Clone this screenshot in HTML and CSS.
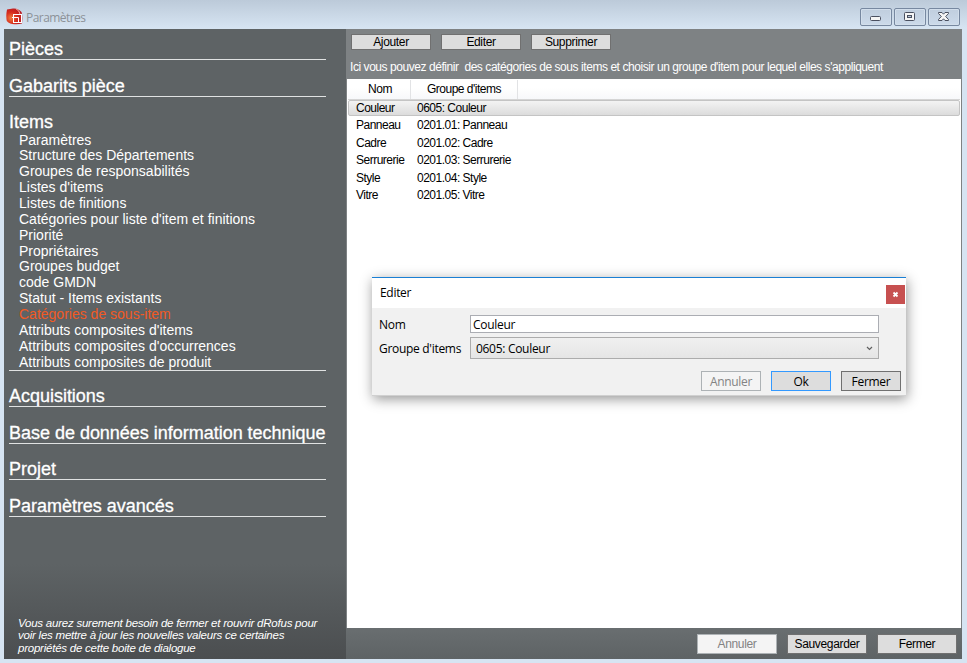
FILE: index.html
```html
<!DOCTYPE html>
<html lang="fr">
<head>
    <meta charset="UTF-8">
    <meta name="viewport" content="width=device-width, initial-scale=1.0">
    <title>Paramètres</title>
    <link rel="stylesheet" href="styles.css">
</head>
<body>
    <div class="window">
        <header class="titlebar">
            <svg class="logo" width="17" height="17" viewBox="0 0 17 17">
                <defs>
                    <radialGradient id="logoFill" cx="0.3" cy="0.6" r="0.7">
                        <stop offset="0" stop-color="#f08040"/>
                        <stop offset="0.5" stop-color="#d8301f"/>
                        <stop offset="1" stop-color="#b81820"/>
                    </radialGradient>
                </defs>
                <path d="M1 1.500Q-0.300 8 0.800 13Q4 16.500 9 16.300Q13 16.500 16 15.500Q16.800 8 15.500 4Q12 0 7 0.500Z" fill="url(#logoFill)"/>
                <path d="M10 0.800Q13.500 2.500 14 6" fill="none" stroke="#f4b0a0" stroke-width="1"/>
                <rect x="7.500" y="6.500" width="8" height="8" fill="none" stroke="#fff"/>
                <path d="M6 9.500H12.500V15" fill="none" stroke="#fff"/>
            </svg>
            <span class="window-title">Paramètres</span>
            <div class="window-controls">
                <span class="control">
                    <svg width="30" height="16" viewBox="0 0 30 16"><rect x="9.500" y="7.500" width="10" height="4" rx="1" fill="#f5f5f5" stroke="#4a5060"/></svg>
                </span>
                <span class="control">
                    <svg width="30" height="16" viewBox="0 0 30 16">
                        <rect x="9.500" y="3.500" width="10" height="8" rx="1" fill="#f5f5f5" stroke="#4a5060"/>
                        <rect x="12.500" y="6.500" width="4" height="2" fill="#b9c9da" stroke="#4a5060"/>
                    </svg>
                </span>
                <span class="control">
                    <svg width="30" height="16" viewBox="0 0 30 16">
                        <path d="M9.500 3.500H13L14.500 5.200L16 3.500H19.500V4.500L16.700 7.500L19.500 10.500V11.500H16L14.500 9.800L13 11.500H9.500V10.500L12.300 7.500L9.500 4.500Z" fill="#f5f5f5" stroke="#4a5060"/>
                    </svg>
                </span>
            </div>
        </header>

        <div class="content">
            <nav class="sidebar">
                <section class="group"><h2>Pièces</h2></section>
                <section class="group"><h2>Gabarits pièce</h2></section>
                <section class="group">
                    <h2>Items</h2>
                    <ul>
                        <li>Paramètres</li>
                        <li>Structure des Départements</li>
                        <li>Groupes de responsabilités</li>
                        <li>Listes d'items</li>
                        <li>Listes de finitions</li>
                        <li>Catégories pour liste d'item et finitions</li>
                        <li>Priorité</li>
                        <li>Propriétaires</li>
                        <li>Groupes budget</li>
                        <li>code GMDN</li>
                        <li>Statut - Items existants</li>
                        <li class="active">Catégories de sous-item</li>
                        <li>Attributs composites d'items</li>
                        <li>Attributs composites d'occurrences</li>
                        <li>Attributs composites de produit</li>
                    </ul>
                </section>
                <section class="group"><h2>Acquisitions</h2></section>
                <section class="group"><h2>Base de données information technique</h2></section>
                <section class="group"><h2>Projet</h2></section>
                <section class="group"><h2>Paramètres avancés</h2></section>
                <p class="note">Vous aurez surement besoin de fermer et rouvrir dRofus pour<br>voir les mettre à jour les nouvelles valeurs ce certaines<br>propriétés de cette boite de dialogue</p>
            </nav>

            <main class="main">
                <div class="toolbar">
                    <button class="btn">Ajouter</button>
                    <button class="btn">Editer</button>
                    <button class="btn">Supprimer</button>
                </div>
                <p class="info">Ici vous pouvez définir&nbsp; des catégories de sous items et choisir un groupe d'item pour lequel elles s'appliquent</p>

                <div class="list">
                    <div class="row head"><span>Nom</span><span>Groupe d'items</span></div>
                    <div class="row selected"><span>Couleur</span><span>0605: Couleur</span></div>
                    <div class="row"><span>Panneau</span><span>0201.01: Panneau</span></div>
                    <div class="row"><span>Cadre</span><span>0201.02: Cadre</span></div>
                    <div class="row"><span>Serrurerie</span><span>0201.03: Serrurerie</span></div>
                    <div class="row"><span>Style</span><span>0201.04: Style</span></div>
                    <div class="row"><span>Vitre</span><span>0201.05: Vitre</span></div>
                </div>

                <footer class="footer">
                    <button class="btn" disabled>Annuler</button>
                    <button class="btn">Sauvegarder</button>
                    <button class="btn">Fermer</button>
                </footer>
            </main>
        </div>
    </div>

    <div class="dialog">
        <div class="dialog-title">
            <span>Editer</span>
            <span class="dialog-close">
                <svg width="19" height="19" viewBox="0 0 19 19"><path d="M7.500 7.500L11.500 11.500M11.500 7.500L7.500 11.500" stroke="#fff" stroke-width="1.800"/></svg>
            </span>
        </div>
        <div class="form">
            <span class="label">Nom</span>
            <div class="field">Couleur</div>
            <span class="label">Groupe d'items</span>
            <div class="field select">
                <span>0605: Couleur</span>
                <svg width="7" height="5" viewBox="0 0 7 5"><path d="M1 1L3.500 3.500L6 1" fill="none" stroke="#606060" stroke-width="1.200"/></svg>
            </div>
        </div>
        <div class="dialog-buttons">
            <button class="dbtn" disabled>Annuler</button>
            <button class="dbtn primary">Ok</button>
            <button class="dbtn">Fermer</button>
        </div>
    </div>
</body>
</html>
```
FILE: styles.css
```css
* {
    margin: 0;
    padding: 0;
    box-sizing: border-box;
}

body {
    width: 967px;
    height: 663px;
    overflow: hidden;
    font-family: "Liberation Sans", Arial, sans-serif;
    font-size: 12px;
    color: #000;
}

.window {
    display: flex;
    flex-direction: column;
    height: 663px;
    padding: 0 5px 4px 4px;
    background: linear-gradient(#bccad9, #d6e4f2 28px);
}

/* Title bar */
.titlebar {
    display: flex;
    align-items: flex-start;
    height: 29px;
    flex: none;
}

.logo {
    margin: 8px 0 0 2px;
}

.window-title {
    margin: 10px 0 0 3px;
    font-family: "Open Sans", sans-serif;
    font-size: 12px;
    line-height: 16px;
    letter-spacing: -0.55px;
    color: #8c9298;
}

.window-controls {
    display: flex;
    gap: 2px;
    margin: 8px 2px 0 auto;
}

.control {
    width: 32px;
    height: 18px;
    border: 1px solid #7788a0;
    border-radius: 2px;
    background: linear-gradient(#c0cede, #ccdaea);
    box-shadow: inset 0 0 0 1px #d2deeb;
}

.control svg {
    display: block;
}

.content {
    display: flex;
    flex: 1;
}

/* Sidebar */
.sidebar {
    display: flex;
    flex-direction: column;
    width: 342px;
    padding: 0 20px 5px 5px;
    background: linear-gradient(#5e6365 535px, #4b4e50);
    color: #fff;
}

.group {
    padding-top: 15.5px;
    border-bottom: 1px solid #e0e2e2;
}

.group:first-child {
    padding-top: 10px;
}

.group h2 {
    font-size: 18px;
    font-weight: normal;
    line-height: 20px;
    letter-spacing: -0.02px;
    white-space: nowrap;
    -webkit-text-stroke: 0.3px #fff;
}

.group ul {
    margin-bottom: -0.6px;
    padding: 0.6px 0 0 10px;
    list-style: none;
}

.group li {
    font-size: 14px;
    line-height: 15.86px;
    white-space: nowrap;
}

.group .active {
    color: #f15a24;
}

.note {
    margin-top: auto;
    padding-left: 9px;
    font-size: 11.5px;
    font-style: italic;
    line-height: 12.5px;
    letter-spacing: -0.23px;
    white-space: nowrap;
}

/* Main panel */
.main {
    display: flex;
    flex-direction: column;
    width: 616px;
    background: #7e8284;
}

.toolbar {
    display: flex;
    gap: 10px;
    padding: 5px 5px 0;
}

.btn {
    width: 80px;
    height: 16px;
    border: 1px solid #707070;
    background: #dddddd;
    font-family: "Liberation Sans", Arial, sans-serif;
    font-size: 12px;
    letter-spacing: -0.35px;
    line-height: 14px;
    color: #000;
}

.btn:disabled {
    border-color: #adb2b5;
    background: #f4f4f4;
    color: #838383;
}

.info {
    height: 29px;
    padding: 9px 0 0 4px;
    font-size: 12px;
    line-height: 16px;
    letter-spacing: -0.44px;
    white-space: nowrap;
    color: #fff;
}

.list {
    flex: 1;
    margin: 0 1px;
    padding-left: 1px;
    background: #fff;
}

.row {
    display: grid;
    grid-template-columns: 61px 1fr;
    height: 17.5px;
    margin-right: 1px;
    padding-left: 8px;
    font-size: 12px;
    letter-spacing: -0.5px;
    line-height: 17px;
}

.row.head {
    grid-template-columns: 61px 107px;
    height: 20px;
    margin-top: 1px;
    padding-left: 2px;
    border-bottom: 1px solid #d5d5d5;
    background: linear-gradient(#fff 40%, #f7f8fa);
    line-height: 18px;
    text-align: center;
}

.head span {
    border-right: 1px solid #e2e3e5;
}

.row.selected {
    height: 16px;
    margin-bottom: 1px;
    padding-left: 7px;
    border: 1px solid #c4c4c4;
    border-radius: 2px;
    background: linear-gradient(#f3f3f3, #dcdcdc);
    line-height: 14px;
}

.footer {
    display: flex;
    justify-content: flex-end;
    gap: 10px;
    height: 31px;
    padding: 6px 5px 0 0;
    background: linear-gradient(#696e70, #5e6365);
}

.footer .btn {
    height: 20px;
    line-height: 18px;
}

/* Dialog floating above the window */
.dialog {
    position: absolute;
    left: 372px;
    top: 277px;
    width: 534px;
    height: 119px;
    border-top: 1px solid #1a7fd4;
    border-bottom: 1px solid #d0d0d0;
    background: #f1f1f1;
    box-shadow: 1px 3px 12px rgba(0, 0, 0, 0.42);
    font-family: "Open Sans", sans-serif;
    font-size: 12px;
    letter-spacing: -0.3px;
}

.dialog-title {
    display: flex;
    justify-content: space-between;
    height: 30px;
    padding: 7px 1px 0 8px;
    background: #fff;
    line-height: 16px;
}

.dialog-close {
    width: 19px;
    height: 19px;
    background: #c75050;
}

.dialog-close svg {
    display: block;
}

.form {
    display: grid;
    grid-template-columns: 91px 409px;
    grid-template-rows: 18px 22px;
    row-gap: 4px;
    padding: 7px 0 0 7px;
}

.label {
    align-self: center;
    padding-top: 2px;
    line-height: 16px;
}

.field {
    padding: 0 2px;
    border: 1px solid #abadb3;
    background: #fff;
    line-height: 17px;
}

.select {
    display: flex;
    align-items: center;
    justify-content: space-between;
    padding: 0 5px;
    border-color: #acacac;
    background: linear-gradient(#f0f0f0, #e5e5e5);
}

.dialog-buttons {
    display: flex;
    justify-content: flex-end;
    gap: 10px;
    padding: 12px 5px 0 0;
}

.dbtn {
    width: 60px;
    height: 20px;
    border: 1px solid #707070;
    background: #dddddd;
    font-family: "Open Sans", sans-serif;
    font-size: 12px;
    letter-spacing: -0.3px;
    line-height: 19px;
    color: #000;
}

.dbtn.primary {
    border-color: #3399ff;
}

.dbtn:disabled {
    border-color: #adb2b5;
    background: #f4f4f4;
    color: #838383;
}
```
